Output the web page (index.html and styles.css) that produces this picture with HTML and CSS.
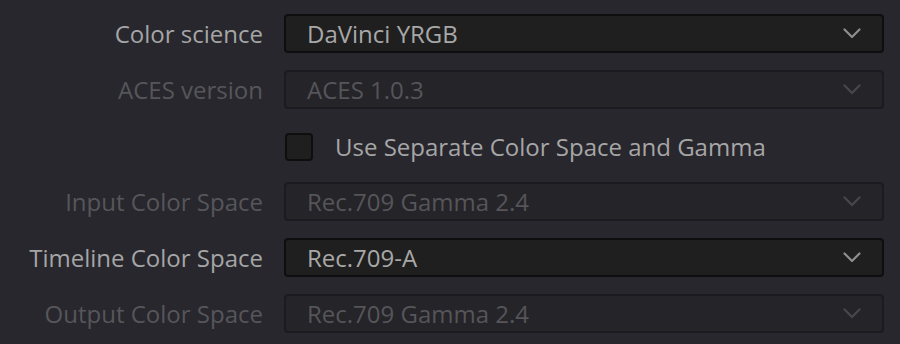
FILE: index.html
```html
<!DOCTYPE html>
<html>
<head>
<meta charset="utf-8">
<link rel="stylesheet" href="styles.css">
</head>
<body>
<div class="panel">
  <div class="label">Color science</div>
  <div class="select">
    <span class="value">DaVinci YRGB</span>
    <svg class="chev" width="18" height="11" viewBox="0 0 18 11"><polyline points="1.5,1.5 9,9 16.5,1.5" fill="none" stroke="currentColor" stroke-width="2.2" stroke-linecap="round" stroke-linejoin="round"/></svg>
  </div>

  <div class="label disabled">ACES version</div>
  <div class="select disabled">
    <span class="value">ACES 1.0.3</span>
    <svg class="chev" width="18" height="11" viewBox="0 0 18 11"><polyline points="1.5,1.5 9,9 16.5,1.5" fill="none" stroke="currentColor" stroke-width="2.2" stroke-linecap="round" stroke-linejoin="round"/></svg>
  </div>

  <div class="label"></div>
  <div class="check-row">
    <span class="checkbox"></span>
    <span class="check-label">Use Separate Color Space and Gamma</span>
  </div>

  <div class="label disabled">Input Color Space</div>
  <div class="select disabled">
    <span class="value">Rec.709 Gamma 2.4</span>
    <svg class="chev" width="18" height="11" viewBox="0 0 18 11"><polyline points="1.5,1.5 9,9 16.5,1.5" fill="none" stroke="currentColor" stroke-width="2.2" stroke-linecap="round" stroke-linejoin="round"/></svg>
  </div>

  <div class="label">Timeline Color Space</div>
  <div class="select">
    <span class="value">Rec.709-A</span>
    <svg class="chev" width="18" height="11" viewBox="0 0 18 11"><polyline points="1.5,1.5 9,9 16.5,1.5" fill="none" stroke="currentColor" stroke-width="2.2" stroke-linecap="round" stroke-linejoin="round"/></svg>
  </div>

  <div class="label disabled">Output Color Space</div>
  <div class="select disabled">
    <span class="value">Rec.709 Gamma 2.4</span>
    <svg class="chev" width="18" height="11" viewBox="0 0 18 11"><polyline points="1.5,1.5 9,9 16.5,1.5" fill="none" stroke="currentColor" stroke-width="2.2" stroke-linecap="round" stroke-linejoin="round"/></svg>
  </div>
</div>
</body>
</html>
```
FILE: styles.css
```css
html, body {
  margin: 0;
  padding: 0;
  background: #28272d;
  height: 100%;
}
body {
  font-family: "Open Sans", "Noto Sans", sans-serif;
  font-size: 24px;
  color: #a6a6a6;
}
.panel {
  display: grid;
  grid-template-columns: 263px 600px;
  grid-auto-rows: 39px;
  column-gap: 21px;
  row-gap: 17px;
  padding-top: 14px;
}
.label {
  display: flex;
  align-items: center;
  justify-content: flex-end;
  white-space: nowrap;
  color: #a5a5a5;
}
.label.disabled {
  color: #56565a;
}
.select {
  box-sizing: border-box;
  display: flex;
  align-items: center;
  justify-content: space-between;
  padding: 0 21px 0 21px;
  background: #1f1f1f;
  border: 2px solid #0e0e0e;
  border-radius: 4px;
  color: #a8a8a8;
}
.select .chev {
  color: #8e8e8e;
  display: block;
}
.select.disabled {
  background: #252428;
  border-color: #1c1b1f;
  color: #55555a;
}
.select.disabled .chev {
  color: #48484c;
}
.value {
  white-space: nowrap;
  padding-bottom: 1px;
}
.check-row {
  display: flex;
  align-items: center;
  gap: 22px;
  padding-left: 1px;
  padding-top: 2px;
}
.checkbox {
  box-sizing: border-box;
  width: 28px;
  height: 28px;
  background: #1f1f1f;
  border: 2px solid #0e0e0e;
  border-radius: 4px;
}
.check-label {
  color: #a6a6a6;
  white-space: nowrap;
}
```
